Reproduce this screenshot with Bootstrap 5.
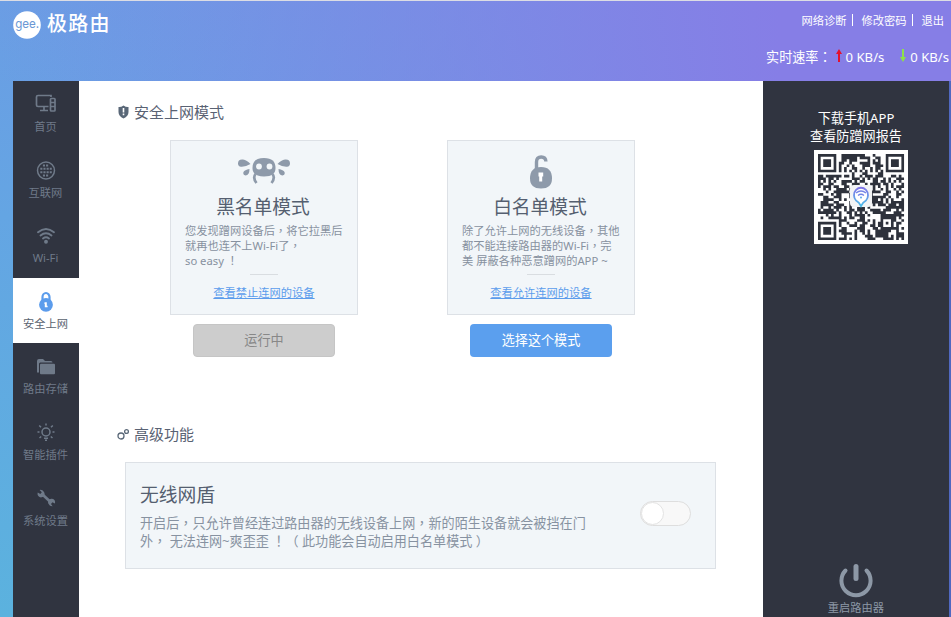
<!DOCTYPE html>
<html lang="zh-CN">
<head>
<meta charset="utf-8">
<meta name="viewport" content="width=device-width, initial-scale=1">
<title>极路由 - 安全上网</title>
<link href="https://cdn.jsdelivr.net/npm/bootstrap@5.3.0/dist/css/bootstrap.min.css" rel="stylesheet">
<style>
body{height:617px;font-family:"Noto Sans","Noto Sans CJK SC",sans-serif;font-size:11.25px;font-weight:300;line-height:15px;color:#87919f;
 background:linear-gradient(90deg,rgba(134,126,230,0),#867ee6 82%) 0 0/100% 81px no-repeat,linear-gradient(90deg,transparent 900px,#5068c0 900px) 0 81px/100% 536px no-repeat,linear-gradient(180deg,#6b9de4 0,#64a5e3 35%,#5bb2de 100%)}
body::after{content:"";position:absolute;left:0;top:0;width:100%;height:1px;background:#dcdde4}
svg{display:block}
.pc{font-family:"Noto Sans CJK TC",sans-serif}
.topbar{height:81px;padding:11px 2px 0 13px}
.logo-text{font-size:20px;line-height:26px;letter-spacing:1.2px;font-weight:500;padding-left:6px}
.toplinks{font-size:11.25px;line-height:16px;padding:2px 5px 0 0;font-weight:400}
.toplinks .sep{width:1px;height:12px;background:#fff;margin:1px 8px 0 6px}
.rate{font-size:13.125px;line-height:18px;margin-top:19px;font-weight:400}
.frame{height:536px;padding:0 2px 0 13px}
.side{width:66px;background:#303440;color:#6f7a89}
.side-item{height:65.6px;padding:12px 1px 0 0;color:#6f7a89}
.side-item svg{width:22px;height:22px}
.side-item span{line-height:17px;margin-top:3px;font-weight:400}
.side-item.current{background:#fff;color:#5a6370}
.side-item.current svg{color:#5b9cec}
.main{width:684px}
.right{width:186px;background:#303440}
.sec{font-size:15px;line-height:20px;color:#596273;font-weight:400;padding:21px 0 0 39px}
.sec.more{padding:67px 0 0 38px}
.sec svg{margin-right:5px}
.modes{padding:18px 0 0 91px;gap:89px}
.mode-box{width:188px;height:175px;border:1px solid #dde1e6;background:#f2f6f9;padding:13px 0 0 14px}
.mode-box .pic{margin-left:-14px;height:39px}
.mode-name{font-size:18.75px;line-height:28px;color:#555f70;margin-left:-16px;font-weight:400}
.desc{margin-top:2px;font-weight:400}
.rule{width:28px;height:1px;background:#d9dde1;margin:6px auto 0;transform:translateX(-7px)}
.mode-link{color:#5b9cec;margin-left:-14px;margin-top:10px;font-weight:400}
.mode-btn{width:142px;height:33px;margin-top:9px;font-size:13.125px;line-height:19px;border-radius:4px;padding:0;border:0}
.mode-btn.run,.mode-btn.run:disabled{background:#cdcdcd;color:#888;opacity:1;border:1px solid #c5c5c5}
.mode-btn.pick{background:#5b9fee;color:#fff}
.shield{margin:18px 0 0 46px;width:591px;height:107px;border:1px solid #dde1e6;background:#f2f6f9;padding:18px 24px 0 14px}
.shield h2{font-size:18.75px;line-height:28px;margin:0 0 5px;color:#555f70;font-weight:400}
.shield p{font-size:13.125px;line-height:18px;margin:0;font-weight:400;color:#8792a1}
.toggle{width:51px;height:25px;border:1px solid #dedede;border-radius:13px;background:#f8f8f8;margin-top:20px}
.toggle i{display:block;width:23px;height:23px;border-radius:50%;background:#fff;border:1px solid #e3e3e3}
.app{font-size:13.125px;line-height:18px;color:#fff;padding-top:28px;font-weight:400}
.qr{width:94px;height:94px;background:#fff;margin:5px 0 0 9px}
.restart{color:#8d98a6;font-weight:400;padding-bottom:2px}
.restart span{margin-top:2px}
</style>
<script src="https://cdn.jsdelivr.net/npm/bootstrap@5.3.0/dist/js/bootstrap.bundle.min.js"></script>
</head>
<body class="overflow-hidden position-relative">
<header class="topbar d-flex justify-content-between text-white">
  <div class="d-flex align-items-start">
    <svg width="28" height="28" viewBox="0 0 28 28"><circle cx="14" cy="14" r="13.8" fill="#fff"/><text x="14.200" y="16.800" text-anchor="middle" font-family="Inter,sans-serif" font-size="12.5" font-weight="400" fill="#6b98d4" textLength="24" lengthAdjust="spacingAndGlyphs">gee.</text></svg>
    <span class="logo-text">极路由</span>
  </div>
  <div class="d-flex flex-column align-items-end text-nowrap">
    <nav class="toplinks d-flex"><span>网络诊断</span><span class="sep"></span><span>修改密码</span><span class="sep"></span><span>退出</span></nav>
    <div class="rate d-flex"><span>实时速率<span class="pc" lang="zh-Hant">：</span></span>
      <svg class="mx-1" width="6" height="14" viewBox="0 0 6 14"><path d="M3 1 6 6H4v8H2V6H0z" fill="#e3112c"/></svg><span>0 KB/s</span>
      <svg class="ms-3 me-1" width="6" height="14" viewBox="0 0 6 14"><path d="M3 14 0 9h2V1h2v8h2z" fill="#8ee04a"/></svg><span>0 KB/s</span></div>
  </div>
</header>
<div class="frame d-flex">
  <aside class="side flex-shrink-0">
    <div class="side-item d-flex flex-column align-items-center">
      <svg viewBox="0 0 22 22" fill="none" stroke="currentColor" stroke-width="1.7"><path d="M16 4V2.500H3Q1.500 2.500 1.500 4V12Q1.500 13.500 3 13.500H13.500"/><path d="M9 14v3M5 17.500h8"/><rect x="15.500" y="5.500" width="4.500" height="12.500" rx=".8"/><path d="M16 9.500h4M16 13.500h4"/></svg><span>首页</span></div>
    <div class="side-item d-flex flex-column align-items-center">
      <svg viewBox="0 0 22 22" fill="none" stroke="currentColor"><circle cx="11" cy="11.500" r="8.500" stroke-width="1.500"/><path d="M7.900 6.500h6.300M5.300 9.800h11.500M5.300 13.200h11.500M7.900 16.500h6.300" stroke-width="2.100" stroke-dasharray="2.100 1.050"/></svg><span>互联网</span></div>
    <div class="side-item d-flex flex-column align-items-center">
      <svg viewBox="0 0 22 22" fill="none" stroke="currentColor" stroke-width="1.900" stroke-linecap="round"><path d="M3 8.200Q11 1.600 19 8.200M5.500 11.400q5.500-4.500 11 0M8 14.500q3-2.400 6 0"/><circle cx="11" cy="17.700" r="1" fill="currentColor"/></svg><span>Wi-Fi</span></div>
    <div class="side-item current d-flex flex-column align-items-center">
      <svg viewBox="0 0 22 22"><path d="M7.500 11V7a3.500 4 0 0 1 7 0V11" fill="none" stroke="currentColor" stroke-width="2.200"/><circle cx="11" cy="14.800" r="6.900" fill="currentColor"/><path d="M9.600 12.200h2.200v3.500h.8v1.500H9.800v-3.500h-.6z" fill="#fff"/></svg><span>安全上网</span></div>
    <div class="side-item d-flex flex-column align-items-center">
      <svg viewBox="0 0 22 22" fill="currentColor"><path d="M2 17.500V6q0-2 2-2h4l2 2h6q1.500 0 1.500 1.600H5.200Q4 7.700 4 9v8.500z"/><rect x="5" y="8.800" width="15" height="10.500" rx="1"/></svg><span>路由存储</span></div>
    <div class="side-item d-flex flex-column align-items-center">
      <svg viewBox="0 0 22 22" fill="none" stroke="currentColor" stroke-width="1.500"><circle cx="11" cy="11" r="4"/><path d="M11 2.500v2M4.200 4.500l1.800 1.800M17.800 4.500 16 6.300M2.500 11h2M17.500 11h2M4.500 17l1.700-1.500M17.500 17l-1.700-1.500M9 17.300h4M10 19.300h2"/></svg><span>智能插件</span></div>
    <div class="side-item d-flex flex-column align-items-center">
      <svg viewBox="0 0 22 22"><path d="M7 7 15.500 15" stroke="currentColor" stroke-width="2.800"/><path d="M4.600 2.900 6.800 5.200 5.300 7 2.800 5.600A3.500 3.500 0 1 0 8.800 4.700 4 4 0 0 0 4.600 2.900zM17.600 19.300 16 16.900 17.500 15.200 19.800 16.500A3.500 3.500 0 1 0 13.600 17 4 4 0 0 0 17.600 19.300z" fill="currentColor"/></svg><span>系统设置</span></div>
  </aside>
  <main class="main bg-white flex-shrink-0">
    <div class="sec d-flex align-items-center">
      <svg width="11" height="14" viewBox="0 0 11 14"><path d="M5.500.5Q8 2.300 10.500 2v5q0 4-5 6.500Q.5 11 .5 7V2Q3 2.300 5.500.5" fill="#596777"/><path d="M5.500 3v4.500M5.500 8.500v1.700" stroke="#fff" stroke-width="1.600"/></svg>安全上网模式</div>
    <div class="modes d-flex">
      <section class="d-flex flex-column align-items-center">
        <div class="mode-box text-nowrap">
          <div class="pic d-flex justify-content-center"><svg width="54" height="32" viewBox="0 0 54 32" fill="#8e9aaa"><path d="M27 4c8 0 11.500 3.500 11.500 10 0 5.500-3.500 8.500-11.500 8.500S15.500 19.500 15.500 14C15.500 7.500 19 4 27 4"/><circle cx="22" cy="12.500" r="2.900" fill="#f2f6f9"/><circle cx="32.500" cy="12.500" r="2.900" fill="#f2f6f9"/><path d="M1 9.500Q1 5 6 5.500q4 .5 7.500 4.500-5 3-9.500 2.700Q1 12.500 1 9.500M53 9.500q0-4.500-5-4-4 .500-7.500 4.500 5 3 9.500 2.700Q53 12.500 53 9.500M12.500 15q0 6-4 6.500-3-.5-2-3.500 1-2 6-3M41.500 15q0 6 4 6.500 3-.5 2-3.500-1-2-6-3"/><path d="M18.500 20q-3 4 1 9M35.500 20q3 4-1 9" fill="none" stroke="#8e9aaa" stroke-width="2.700"/></svg></div>
          <div class="mode-name text-center">黑名单模式</div>
          <div class="desc">您发现蹭网设备后<span class="pc" lang="zh-Hant">，</span>将它拉黑后<br>就再也连不上Wi-Fi了<span class="pc" lang="zh-Hant">，</span><br>so easy <span class="pc" lang="zh-Hant">！</span></div>
          <div class="rule"></div>
          <div class="text-center mode-link text-decoration-underline">查看禁止连网的设备</div>
        </div>
        <button class="btn mode-btn run" disabled>运行中</button>
      </section>
      <section class="d-flex flex-column align-items-center">
        <div class="mode-box text-nowrap">
          <div class="pic d-flex justify-content-center"><svg width="24" height="36" viewBox="0 0 24 36"><path d="M7.500 16V8q0-5 4.700-5 4.500 0 4.700 4.500" fill="none" stroke="#8e9aaa" stroke-width="3.400"/><path d="M12 13q11 0 11 11.500Q23 34.500 12 34.500T1 24.500Q1 13 12 13" fill="#8e9aaa"/><path d="M9.500 18.500h4.700v4h-1v5h-3v-5h-.7z" fill="#fff"/></svg></div>
          <div class="mode-name text-center">白名单模式</div>
          <div class="desc">除了允许上网的无线设备<span class="pc" lang="zh-Hant">，</span>其他<br>都不能连接路由器的Wi-Fi<span class="pc" lang="zh-Hant">，</span>完<br>美 屏蔽各种恶意蹭网的APP ~</div>
          <div class="rule"></div>
          <div class="text-center mode-link text-decoration-underline">查看允许连网的设备</div>
        </div>
        <button class="btn mode-btn pick">选择这个模式</button>
      </section>
    </div>
    <div class="sec more d-flex align-items-center">
      <svg width="12" height="13" viewBox="0 0 12 13" fill="none" stroke="#596777" stroke-width="1.300"><circle cx="4" cy="8" r="3"/><circle cx="9.500" cy="3.500" r="1.900"/></svg>高级功能</div>
    <div class="shield d-flex justify-content-between text-nowrap">
      <div><h2>无线网盾</h2><p>开启后<span class="pc" lang="zh-Hant">，</span>只允许曾经连过路由器的无线设备上网<span class="pc" lang="zh-Hant">，</span>新的陌生设备就会被挡在门<br>外<span class="pc" lang="zh-Hant">，</span> 无法连网~爽歪歪 <span class="pc" lang="zh-Hant">！</span>（ 此功能会自动启用白名单模式 ）</p></div>
      <div class="toggle"><i></i></div>
    </div>
  </main>
  <aside class="right d-flex flex-column align-items-center flex-shrink-0 text-center">
    <div class="app text-nowrap">下载手机APP<br>查看防蹭网报告</div>
    <svg id="qr" class="qr" viewBox="0 0 94 94"></svg>
    <div class="restart d-flex flex-column align-items-center mt-auto">
      <svg width="34" height="35" viewBox="0 0 34 35" fill="none" stroke="currentColor" stroke-linecap="round"><path d="M6.500 7.500a14.600 14.600 0 1 0 21 0" stroke-width="4"/><path d="M17 3.500v12" stroke-width="5"/></svg>
      <span>重启路由器</span></div>
  </aside>
</div>
<script>
// Paints the 33-module code for the app download.
(function(){
  var N=33,u=86/N,s=20117,d='';
  function rnd(){s=(s*1103515245+12345)%2147483648;return s/2147483648;}
  function ring(x,y,cx,cy,r){var m=Math.max(Math.abs(x-cx),Math.abs(y-cy));return m>r?null:m;}
  for(var y=0;y<N;y++)for(var x=0;x<N;x++){
    var on=rnd()<0.56,m;
    if(y===6||x===6)on=(x+y)%2===0;
    [[3,3],[29,3],[3,29]].forEach(function(c){m=ring(x,y,c[0],c[1],4);if(m!==null)on=m===3||m<2;});
    m=ring(x,y,26,26,2);if(m!==null)on=m!==1;
    if(on)d+='M'+(4+x*u).toFixed(2)+' '+(4+y*u).toFixed(2)+'h2.66v2.66h-2.66z';
  }
  document.getElementById('qr').innerHTML='<defs><linearGradient id="pin" x2="0" y2="1"><stop stop-color="#8176e8"/><stop offset="1" stop-color="#4cbce8"/></linearGradient></defs><path d="'+d+'" fill="#2e323c"/><rect x="36" y="35" width="22" height="22" rx="4" fill="#f3f4f5"/><path d="M47 56Q45 52 42 50.500a7 7.500 0 1 1 10 0Q49 52 47 56z" fill="#fff" stroke="url(#pin)" stroke-width="1.800"/><path d="M42 43q5-4 10 0M44 45.500q3-2.500 6 0" fill="none" stroke="#7484e6" stroke-width="1.300"/><circle cx="47" cy="47.500" r="1" fill="#5aa8ea"/>';
})();
</script>
</body>
</html>
